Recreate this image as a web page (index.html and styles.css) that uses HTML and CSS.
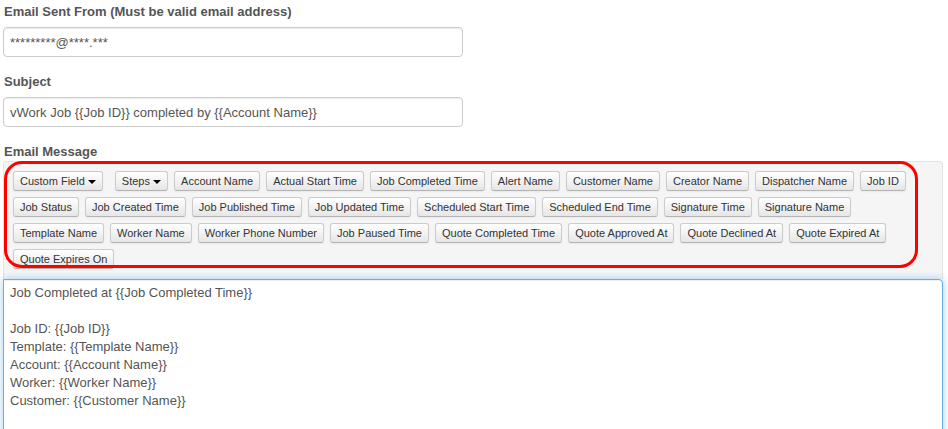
FILE: index.html
```html
<!DOCTYPE html>
<html lang="en">
<head>
    <meta charset="UTF-8">
    <title>Job Completed Email</title>
    <link rel="stylesheet" href="styles.css">
</head>
<body>
    <div class="field">
        <label>Email Sent From (Must be valid email address)</label>
        <input type="text" class="text-input" value="*********@****.***">
    </div>

    <div class="field">
        <label>Subject</label>
        <input type="text" class="text-input" value="vWork Job {{Job ID}} completed by {{Account Name}}">
    </div>

    <label class="message-label">Email Message</label>
    <div class="editor">
        <div class="toolbar">
            <span class="btn-group"><button class="btn">Custom Field <span class="caret"></span></button></span>
            <span class="btn-group"><button class="btn">Steps <span class="caret"></span></button></span>
            <button class="btn">Account Name</button>
            <button class="btn">Actual Start Time</button>
            <button class="btn">Job Completed Time</button>
            <button class="btn">Alert Name</button>
            <button class="btn">Customer Name</button>
            <button class="btn">Creator Name</button>
            <button class="btn">Dispatcher Name</button>
            <button class="btn">Job ID</button>
            <button class="btn">Job Status</button>
            <button class="btn">Job Created Time</button>
            <button class="btn">Job Published Time</button>
            <button class="btn">Job Updated Time</button>
            <button class="btn">Scheduled Start Time</button>
            <button class="btn">Scheduled End Time</button>
            <button class="btn">Signature Time</button>
            <button class="btn">Signature Name</button>
            <button class="btn">Template Name</button>
            <button class="btn">Worker Name</button>
            <button class="btn">Worker Phone Number</button>
            <button class="btn">Job Paused Time</button>
            <button class="btn">Quote Completed Time</button>
            <button class="btn">Quote Approved At</button>
            <button class="btn">Quote Declined At</button>
            <button class="btn">Quote Expired At</button>
            <button class="btn">Quote Expires On</button>
        </div>
        <div class="highlight"></div>
        <textarea class="message">Job Completed at {{Job Completed Time}}

Job ID: {{Job ID}}
Template: {{Template Name}}
Account: {{Account Name}}
Worker: {{Worker Name}}
Customer: {{Customer Name}}</textarea>
    </div>
</body>
</html>
```

FILE: styles.css
```css
* {
    margin: 0;
    padding: 0;
    box-sizing: border-box;
    font-family: 'Liberation Sans', Arial, sans-serif;
}

body {
    background: #fff;
    color: #555;
    padding: 2px 3px 0;
    width: 948px;
    overflow: hidden;
}

label {
    display: block;
    font-size: 13px;
    font-weight: bold;
    line-height: 19px;
    margin-bottom: 6px;
    color: #555;
    padding-left: 1px;
}

.field {
    margin-bottom: 15px;
}

.text-input {
    display: block;
    width: 460px;
    height: 30px;
    padding: 4px 6px;
    font-size: 13px;
    color: #555;
    border: 1px solid #ccc;
    border-radius: 4px;
    box-shadow: inset 0 1px 1px rgba(0, 0, 0, 0.075);
    outline: none;
}

.message-label {
    margin-bottom: 0;
}

.editor {
    position: relative;
    width: 940px;
}

.toolbar {
    display: flex;
    flex-wrap: wrap;
    gap: 6px 6px;
    background: #f5f5f5;
    border: 1px solid #e3e3e3;
    border-bottom: none;
    border-radius: 4px 4px 0 0;
    padding: 9px 9px 10px;
}

.btn-group {
    display: flex;
}

.btn-group:first-child {
    margin-right: 6px;
}

.btn {
    height: 20px;
    padding: 0 6px;
    font-size: 11px;
    line-height: 18px;
    color: #333;
    background: linear-gradient(to bottom, #fff 0%, #e6e6e6 100%);
    border: 1px solid #ccc;
    border-bottom-color: #b3b3b3;
    border-radius: 3px;
    box-shadow: inset 0 1px 0 rgba(255, 255, 255, 0.2), 0 1px 2px rgba(0, 0, 0, 0.05);
    cursor: pointer;
    white-space: nowrap;
}

.caret {
    display: inline-block;
    width: 0;
    height: 0;
    vertical-align: middle;
    border-top: 4px solid #000;
    border-left: 4px solid transparent;
    border-right: 4px solid transparent;
}

.highlight {
    position: absolute;
    left: 1px;
    top: 0;
    width: 914px;
    height: 107px;
    border: 3.5px solid #f00;
    border-radius: 18px;
    pointer-events: none;
}

.message {
    display: block;
    width: 940px;
    height: 160px;
    padding: 4px 6px;
    font-size: 13px;
    line-height: 18px;
    color: #555;
    border: 1px solid #66afe9;
    border-radius: 0 4px 0 0;
    box-shadow: inset 0 1px 1px rgba(0, 0, 0, 0.075), 0 0 8px rgba(102, 175, 233, 0.6);
    outline: none;
    resize: none;
}
```
